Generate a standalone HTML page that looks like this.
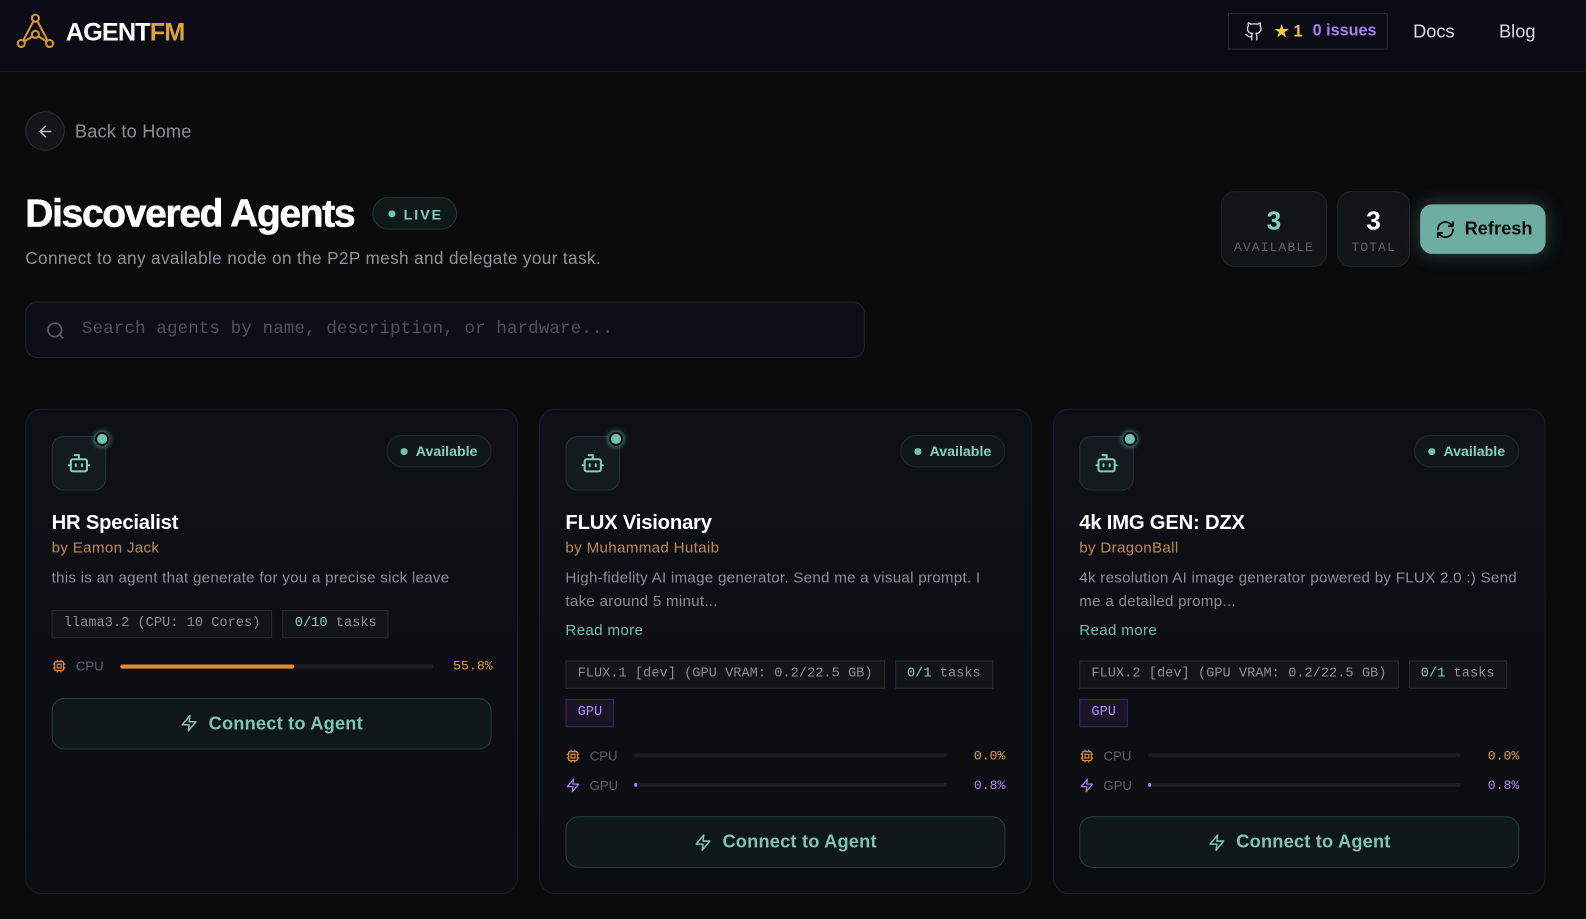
<!DOCTYPE html>
<html><head><meta charset="utf-8"><style>
*{box-sizing:border-box;margin:0;padding:0}
html,body{width:1586px;height:919px;overflow:hidden;background:#0b0b0c}
body{font-family:"Liberation Sans",sans-serif;color:#fff}
#w{position:absolute;left:0;top:0;width:1568px;height:909px;transform:scale(1.0115);transform-origin:0 0}
.mono{font-family:"Liberation Mono","DejaVu Sans Mono",monospace}
header{position:absolute;left:0;top:0;width:1568px;height:71px;background:#0a0b14;border-bottom:1px solid #1b1c26}
.logo{position:absolute;left:65px;top:18px;font-size:25px;font-weight:bold;letter-spacing:-.9px}
.gh{position:absolute;left:1214px;top:13px;width:158px;height:36px;border:1px solid #2a2c36;display:flex;align-items:center;padding-left:15px;font-size:16px;font-weight:bold}
.nav{position:absolute;top:21px;font-size:18px;color:#dcdde3}
.back{position:absolute;left:25px;top:110px;width:39px;height:39px;border:1px solid #2a2c30;border-radius:50%;background:#141518}
.backt{position:absolute;left:74px;top:120px;font-size:18px;color:#8a8e99;letter-spacing:.2px}
h1{position:absolute;left:25px;top:190px;font-size:38.5px;font-weight:900;letter-spacing:-1.3px;-webkit-text-stroke:.6px #fff}
.live{position:absolute;left:368px;top:195px;width:84px;height:32px;border:1px solid #1f3a33;border-radius:16px;background:#0f1a18;color:#7fd1bd;font-size:14px;font-weight:bold;letter-spacing:2px;padding:8px 0 0 30px}
.live:before{content:"";position:absolute;left:15px;top:12px;width:7px;height:7px;border-radius:50%;background:#6cc4ae}
.sub{position:absolute;left:25px;top:246px;font-size:17px;color:#8e929c;letter-spacing:.35px}
.stat{position:absolute;top:189px;height:75px;border:1px solid #222527;border-radius:14px;background:#121415;text-align:center}
.stat b{display:block;font-size:26px;font-weight:900;margin-top:13px}
.stat span{display:block;font-size:13px;color:#5c606b;letter-spacing:1px;margin-top:3px}
.refresh{position:absolute;left:1404px;top:202px;width:124px;height:49px;border-radius:12px;background:#6eaea1;color:#0b0d0e;font-size:18px;font-weight:bold;box-shadow:0 0 18px rgba(110,174,161,.35);display:flex;align-items:center;padding-left:15px;gap:9px}
.search{position:absolute;left:25px;top:298px;width:830px;height:56px;border:1px solid #22242e;border-radius:12px;background:#0e0f16;font-size:17.5px;color:#4d515d;padding:16px 0 0 55px}
.card{position:absolute;top:404px;width:487px;height:480px;border:1px solid #1c1f25;border-radius:16px;background:linear-gradient(#0e1015,#0b0d11);padding:26px 25px 0 25px}
.ibox{width:54px;height:54px;border:1px solid #24343a;border-radius:12px;background:#131b1f;position:relative;display:flex;align-items:center;justify-content:center}
.ibox:after{content:"";position:absolute;right:-4px;top:-5px;width:10px;height:10px;border-radius:50%;background:#6cc4ae;border:2px solid #0e1015;box-shadow:0 0 6px #6cc4ae}
.avail{position:absolute;right:25px;top:25px;height:32px;padding:0 13px 0 28px;border:1px solid #1f2a2b;border-radius:16px;background:#111719;color:#7fd1bd;font-size:14px;font-weight:bold;line-height:30px}
.avail:before{content:"";position:absolute;left:13px;top:12px;width:7px;height:7px;border-radius:50%;background:#6cc4ae}
.title{margin-top:20px;font-size:20px;font-weight:bold;line-height:24px;letter-spacing:-.2px}
.by{margin-top:3px;font-size:15px;line-height:20px;color:#c08a45;letter-spacing:.3px}
.desc{margin-top:8px;font-size:15px;line-height:23px;color:#8a8e98;letter-spacing:.25px}
.rm{margin-top:7.5px;font-size:15px;line-height:20px;color:#79bba9;margin-bottom:3.5px;letter-spacing:.3px}
.tags{margin-top:19.5px;display:flex;flex-wrap:wrap;gap:10px}
.tag{height:28px;border:1px solid #272a30;background:#121418;font-size:13.5px;color:#8a8e98;padding:0 11px;line-height:26px}
.tag em{font-style:normal;color:#7fd1bd}
.gpu{border-color:#3a2a5c;background:#1a1428;color:#b68cf0}
.row{margin-top:20px;height:16px;display:flex;align-items:center;font-size:13px;color:#5f636d}
.row+.row{margin-top:13px}
.row .lab{width:52px;display:flex;align-items:center;gap:9px}
.bar{flex:1;height:4px;background:#1b1d22;border-radius:2px;margin:0 20px 0 16px;position:relative}
.bar i{position:absolute;left:0;top:0;height:4px;border-radius:2px}
.pct{font-size:13px;width:38px;text-align:right}
.btn{margin-top:23px;height:51px;border:1px solid #23403b;border-radius:13px;background:#0f1719;color:#7fc4b3;font-size:18px;font-weight:bold;display:flex;align-items:center;justify-content:center;gap:10px;letter-spacing:.2px}
</style></head><body><div id="w">
<header>
<svg style="position:absolute;left:16px;top:13px" width="38" height="36" viewBox="0 0 38 36" fill="none" stroke="#d59a2f" stroke-width="2"><circle cx="19" cy="5" r="3.5"/><circle cx="19" cy="21" r="3.5"/><circle cx="5" cy="30" r="3.5"/><circle cx="33" cy="30" r="3.5"/><path d="M17 8 7 27M21 8 31 27M16 23 8 28M22 23 30 28"/></svg>
<div class="logo">AGENT<span style="color:#e0a23a">FM</span></div>
<div class="gh"><svg width="20" height="20" viewBox="0 0 24 24" fill="none" stroke="#ddd" stroke-width="1.6" stroke-linecap="round" stroke-linejoin="round"><path d="M15 22v-4a4.8 4.8 0 0 0-1-3.5c3 0 6-2 6-5.5.08-1.25-.27-2.48-1-3.5.28-1.15.28-2.35 0-3.5 0 0-1 0-3 1.5-2.64-.5-5.36-.5-8 0C6 2 5 2 5 2c-.3 1.15-.3 2.35 0 3.5A5.4 5.4 0 0 0 4 9c0 3.5 3 5.5 6 5.5-.39.49-.68 1.050-.85 1.65S8.93 17.38 9 18v4M9 18c-4.51 2-5-2-7-2"/></svg><span style="color:#f2c94c;margin-left:10px">★ 1</span><span style="color:#a97ff0;margin-left:10px">0 issues</span></div>
<div class="nav" style="left:1397px">Docs</div><div class="nav" style="left:1482px">Blog</div>
</header>
<div class="back"><svg style="position:absolute;left:10px;top:10px" width="18" height="18" viewBox="0 0 24 24" fill="none" stroke="#bbb" stroke-width="2" stroke-linecap="round"><path d="M19 12H5M12 19l-7-7 7-7"/></svg></div>
<div class="backt">Back to Home</div>
<h1>Discovered Agents</h1>
<div class="live">LIVE</div>
<div class="sub">Connect to any available node on the P2P mesh and delegate your task.</div>
<div class="stat" style="left:1207px;width:105px"><b style="color:#7fd1bd">3</b><span class="mono">AVAILABLE</span></div>
<div class="stat" style="left:1322px;width:72px"><b>3</b><span class="mono">TOTAL</span></div>
<div class="refresh"><svg width="20" height="20" viewBox="0 0 24 24" fill="none" stroke="#0b0d0e" stroke-width="2.2" stroke-linecap="round" stroke-linejoin="round"><path d="M3 12a9 9 0 0 1 15-6.7L21 8M21 3v5h-5M21 12a9 9 0 0 1-15 6.7L3 16M3 21v-5h5"/></svg>Refresh</div>
<div class="search mono"><svg style="position:absolute;left:19px;top:18px" width="20" height="20" viewBox="0 0 24 24" fill="none" stroke="#5a5e6a" stroke-width="2"><circle cx="11" cy="11" r="8"/><path d="m21 21-4.3-4.3"/></svg>Search agents by name, description, or hardware...</div>

<div class="card" style="left:25px">
<div class="ibox"><svg width="24" height="24" viewBox="0 0 24 24" fill="none" stroke="#7fd1bd" stroke-width="2" stroke-linecap="round"><path d="M12 8V4H8"/><rect x="4" y="8" width="16" height="12" rx="2"/><path d="M2 14h2M20 14h2M15 13v2M9 13v2"/></svg></div>
<div class="avail">Available</div>
<div class="title">HR Specialist</div><div class="by">by Eamon Jack</div>
<div class="desc">this is an agent that generate for you a precise sick leave</div>
<div class="tags mono"><div class="tag">llama3.2 (CPU: 10 Cores)</div><div class="tag"><em>0/10</em> tasks</div></div>
<div class="row"><div class="lab"><svg width="15" height="15" viewBox="0 0 24 24" fill="none" stroke="#e08a35" stroke-width="2"><rect x="5" y="5" width="14" height="14" rx="2"/><rect x="9" y="9" width="6" height="6"/><path d="M9 2v3M15 2v3M9 19v3M15 19v3M2 9h3M2 15h3M19 9h3M19 15h3"/></svg>CPU</div><div class="bar"><i style="width:55.8%;background:#e08a35"></i></div><div class="pct mono" style="color:#e0a040">55.8%</div></div>
<div class="btn"><svg width="18" height="18" viewBox="0 0 24 24" fill="none" stroke="#7fc4b3" stroke-width="2" stroke-linejoin="round"><path d="M13 2 3 14h9l-1 8 10-12h-9l1-8z"/></svg>Connect to Agent</div>
</div>

<div class="card" style="left:533px">
<div class="ibox"><svg width="24" height="24" viewBox="0 0 24 24" fill="none" stroke="#7fd1bd" stroke-width="2" stroke-linecap="round"><path d="M12 8V4H8"/><rect x="4" y="8" width="16" height="12" rx="2"/><path d="M2 14h2M20 14h2M15 13v2M9 13v2"/></svg></div>
<div class="avail">Available</div>
<div class="title">FLUX Visionary</div><div class="by">by Muhammad Hutaib</div>
<div class="desc">High-fidelity AI image generator. Send me a visual prompt. I<br>take around 5 minut...</div>
<div class="rm">Read more</div>
<div class="tags mono"><div class="tag">FLUX.1 [dev] (GPU VRAM: 0.2/22.5 GB)</div><div class="tag"><em>0/1</em> tasks</div><div class="tag gpu">GPU</div></div>
<div class="row"><div class="lab"><svg width="15" height="15" viewBox="0 0 24 24" fill="none" stroke="#e08a35" stroke-width="2"><rect x="5" y="5" width="14" height="14" rx="2"/><rect x="9" y="9" width="6" height="6"/><path d="M9 2v3M15 2v3M9 19v3M15 19v3M2 9h3M2 15h3M19 9h3M19 15h3"/></svg>CPU</div><div class="bar"></div><div class="pct mono" style="color:#e0a040">0.0%</div></div>
<div class="row"><div class="lab"><svg width="15" height="15" viewBox="0 0 24 24" fill="none" stroke="#a97ff0" stroke-width="2" stroke-linejoin="round"><path d="M13 2 3 14h9l-1 8 10-12h-9l1-8z"/></svg>GPU</div><div class="bar"><i style="width:3px;background:#a97ff0"></i></div><div class="pct mono" style="color:#b68cf0">0.8%</div></div>
<div class="btn"><svg width="18" height="18" viewBox="0 0 24 24" fill="none" stroke="#7fc4b3" stroke-width="2" stroke-linejoin="round"><path d="M13 2 3 14h9l-1 8 10-12h-9l1-8z"/></svg>Connect to Agent</div>
</div>

<div class="card" style="left:1041px">
<div class="ibox"><svg width="24" height="24" viewBox="0 0 24 24" fill="none" stroke="#7fd1bd" stroke-width="2" stroke-linecap="round"><path d="M12 8V4H8"/><rect x="4" y="8" width="16" height="12" rx="2"/><path d="M2 14h2M20 14h2M15 13v2M9 13v2"/></svg></div>
<div class="avail">Available</div>
<div class="title">4k IMG GEN: DZX</div><div class="by">by DragonBall</div>
<div class="desc" style="white-space:nowrap">4k resolution AI image generator powered by FLUX 2.0 :) Send<br>me a detailed promp...</div>
<div class="rm">Read more</div>
<div class="tags mono"><div class="tag">FLUX.2 [dev] (GPU VRAM: 0.2/22.5 GB)</div><div class="tag"><em>0/1</em> tasks</div><div class="tag gpu">GPU</div></div>
<div class="row"><div class="lab"><svg width="15" height="15" viewBox="0 0 24 24" fill="none" stroke="#e08a35" stroke-width="2"><rect x="5" y="5" width="14" height="14" rx="2"/><rect x="9" y="9" width="6" height="6"/><path d="M9 2v3M15 2v3M9 19v3M15 19v3M2 9h3M2 15h3M19 9h3M19 15h3"/></svg>CPU</div><div class="bar"></div><div class="pct mono" style="color:#e0a040">0.0%</div></div>
<div class="row"><div class="lab"><svg width="15" height="15" viewBox="0 0 24 24" fill="none" stroke="#a97ff0" stroke-width="2" stroke-linejoin="round"><path d="M13 2 3 14h9l-1 8 10-12h-9l1-8z"/></svg>GPU</div><div class="bar"><i style="width:3px;background:#a97ff0"></i></div><div class="pct mono" style="color:#b68cf0">0.8%</div></div>
<div class="btn"><svg width="18" height="18" viewBox="0 0 24 24" fill="none" stroke="#7fc4b3" stroke-width="2" stroke-linejoin="round"><path d="M13 2 3 14h9l-1 8 10-12h-9l1-8z"/></svg>Connect to Agent</div>
</div>
</div></body></html>
